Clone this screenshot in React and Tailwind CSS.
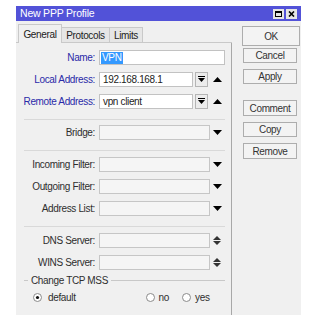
import React from "react";

function DropBtnIcon() {
  return (
    <svg width="7" height="7" viewBox="0 0 7 7">
      <rect x="0" y="0" width="7" height="1" fill="#000" />
      <polygon points="0,2 7,2 3.5,6" fill="#000" />
    </svg>
  );
}

function Up() {
  return (
    <svg width="9" height="5" viewBox="0 0 9 5">
      <polygon points="0,5 9,5 4.5,0" fill="#000" />
    </svg>
  );
}

function Down() {
  return (
    <svg width="9" height="5" viewBox="0 0 9 5">
      <polygon points="0,0 9,0 4.5,5" fill="#000" />
    </svg>
  );
}

function Spin() {
  return (
    <div className="flex flex-col gap-[1px] ml-[3px]">
      <svg width="8" height="4" viewBox="0 0 8 4">
        <polygon points="0,4 8,4 4,0" fill="#333" />
      </svg>
      <svg width="8" height="4" viewBox="0 0 8 4">
        <polygon points="0,0 8,0 4,4" fill="#333" />
      </svg>
    </div>
  );
}

function Radio({ checked }) {
  return (
    <svg width="9" height="9" viewBox="0 0 9 9">
      <circle cx="4.5" cy="4.5" r="4" fill="#fff" stroke="#8a8a8a" strokeWidth="1" />
      {checked && <circle cx="4.5" cy="4.5" r="1.6" fill="#111" />}
    </svg>
  );
}

function Label({ children, blue }) {
  return (
    <div
      className={
        "w-[79px] text-right leading-[15px] whitespace-nowrap " +
        (blue ? "text-[#2a2aa8]" : "text-[#2e2e2e]")
      }
    >
      {children}
    </div>
  );
}

function Sep({ className }) {
  return <div className={"ml-[8px] w-[201px] h-px bg-[#d9d9d9] " + className} />;
}

function Btn({ children, className }) {
  return (
    <div
      className={
        "flex items-center justify-center border border-[#adadad] bg-[#f3f3f3] text-[#333] " +
        className
      }
    >
      {children}
    </div>
  );
}

export default function App() {
  return (
    <div className="w-[309px] h-[320px] bg-white pt-[6px] pl-[16px] font-['Liberation_Sans',Arial,sans-serif] text-[10px] tracking-[-0.35px] text-[#2e2e2e]">
      <div className="w-[285px] h-[309px] bg-[#f0f0f0] flex flex-col">
        {/* Title bar */}
        <div className="h-[15px] bg-[#5252d8] flex items-center justify-between pl-[4px] pr-[4px]">
          <span className="text-white text-[10.5px] tracking-[-0.2px] leading-[15px]">New PPP Profile</span>
          <div className="flex gap-[2px]">
            <div className="w-[11px] h-[10px] bg-[#e4e4e4] flex items-center justify-center">
              <div className="w-[7px] h-[6px] border border-black border-t-2" />
            </div>
            <div className="w-[11px] h-[10px] bg-[#e4e4e4] flex items-center justify-center">
              <svg width="7" height="6" viewBox="0 0 7 6">
                <path d="M1 0.5 L6 5.5 M6 0.5 L1 5.5" stroke="#000" strokeWidth="1.6" />
              </svg>
            </div>
          </div>
        </div>

        <div className="flex flex-1">
          {/* Left panel */}
          <div className="w-[216px] flex flex-col">
            {/* Tabs */}
            <div className="h-[22px] flex items-end">
              <div className="w-[2px] h-px bg-[#c9c9c9]" />
              <div className="w-[44px] h-[19px] border-l border-t border-r border-[#c9c9c9] bg-[#f0f0f0] flex items-center justify-center text-[#222]">
                General
              </div>
              <div className="w-[48px] h-[16px] border-t border-r border-b border-[#c9c9c9] bg-[#e6e6e6] flex items-center justify-center text-[#222]">
                Protocols
              </div>
              <div className="w-[33px] h-[16px] border-t border-r border-b border-[#c9c9c9] bg-[#e6e6e6] flex items-center justify-center text-[#222]">
                Limits
              </div>
              <div className="flex-1 h-px bg-[#c9c9c9]" />
            </div>

            {/* Content */}
            <div className="flex-1 border-r border-[#a8a8a8] flex flex-col pt-[7px]">
              <div className="flex items-center h-[15px]">
                <Label blue>Name:</Label>
                <div className="ml-[4px] w-[126px] h-[15px] border border-[#c2c2c2] bg-white flex items-center pl-[1px]">
                  <span className="bg-[#3399ff] text-white leading-[12px] px-[1px]">VPN</span>
                </div>
              </div>

              <div className="flex items-center h-[15px] mt-[7px]">
                <Label blue>Local Address:</Label>
                <div className="ml-[4px] w-[94px] h-[15px] border border-[#c2c2c2] bg-white flex items-center pl-[3px] text-[#222]">
                  192.168.168.1
                </div>
                <div className="ml-[2px] w-[13px] h-[15px] border border-[#b5b5b5] bg-[#ececec] flex items-center justify-center">
                  <DropBtnIcon />
                </div>
                <div className="ml-[5px] flex items-center">
                  <Up />
                </div>
              </div>

              <div className="flex items-center h-[15px] mt-[7px]">
                <Label blue>Remote Address:</Label>
                <div className="ml-[4px] w-[94px] h-[15px] border border-[#c2c2c2] bg-white flex items-center pl-[3px] text-[#222]">
                  vpn client
                </div>
                <div className="ml-[2px] w-[13px] h-[15px] border border-[#b5b5b5] bg-[#ececec] flex items-center justify-center">
                  <DropBtnIcon />
                </div>
                <div className="ml-[5px] flex items-center">
                  <Up />
                </div>
              </div>

              <Sep className="mt-[10px]" />

              <div className="flex items-center h-[15px] mt-[5px]">
                <Label>Bridge:</Label>
                <div className="ml-[4px] w-[111px] h-[15px] border border-[#c6c6c6] bg-[#f5f5f5]" />
                <div className="ml-[3px] flex items-center">
                  <Down />
                </div>
              </div>

              <Sep className="mt-[10px]" />

              <div className="flex items-center h-[15px] mt-[6px]">
                <Label>Incoming Filter:</Label>
                <div className="ml-[4px] w-[111px] h-[15px] border border-[#c6c6c6] bg-[#f5f5f5]" />
                <div className="ml-[3px] flex items-center">
                  <Down />
                </div>
              </div>

              <div className="flex items-center h-[15px] mt-[7px]">
                <Label>Outgoing Filter:</Label>
                <div className="ml-[4px] w-[111px] h-[15px] border border-[#c6c6c6] bg-[#f5f5f5]" />
                <div className="ml-[3px] flex items-center">
                  <Down />
                </div>
              </div>

              <div className="flex items-center h-[15px] mt-[7px]">
                <Label>Address List:</Label>
                <div className="ml-[4px] w-[111px] h-[15px] border border-[#c6c6c6] bg-[#f5f5f5]" />
                <div className="ml-[3px] flex items-center">
                  <Down />
                </div>
              </div>

              <Sep className="mt-[10px]" />

              <div className="flex items-center h-[15px] mt-[6px]">
                <Label>DNS Server:</Label>
                <div className="ml-[4px] w-[111px] h-[15px] border border-[#c6c6c6] bg-[#f5f5f5]" />
                <Spin />
              </div>

              <div className="flex items-center h-[15px] mt-[7px]">
                <Label>WINS Server:</Label>
                <div className="ml-[4px] w-[111px] h-[15px] border border-[#c6c6c6] bg-[#f5f5f5]" />
                <Spin />
              </div>

              {/* Group */}
              <div className="flex items-center h-[13px] mt-[4px] ml-[8px] w-[201px]">
                <div className="w-[4px] h-px bg-[#c8c8c8]" />
                <span className="px-[3px] leading-[13px] text-[#2e2e2e]">Change TCP MSS</span>
                <div className="flex-1 h-px bg-[#c8c8c8]" />
              </div>

              <div className="flex items-center h-[14px] mt-[3px]">
                <div className="ml-[17px] flex items-center">
                  <Radio checked />
                </div>
                <span className="ml-[6px]">default</span>
                <div className="ml-[70px] flex items-center">
                  <Radio />
                </div>
                <span className="ml-[4px]">no</span>
                <div className="ml-[13px] flex items-center">
                  <Radio />
                </div>
                <span className="ml-[4px]">yes</span>
              </div>
            </div>
          </div>

          {/* Right buttons */}
          <div className="flex flex-col pl-[10px] pt-[5px]">
            <Btn className="w-[58px] h-[20px] border-[#5a5a5a]">OK</Btn>
            <Btn className="w-[54px] h-[15px] ml-[1px] mt-[2px]">Cancel</Btn>
            <Btn className="w-[54px] h-[15px] ml-[1px] mt-[6px]">Apply</Btn>
            <Btn className="w-[54px] h-[16px] ml-[1px] mt-[16px]">Comment</Btn>
            <Btn className="w-[54px] h-[15px] ml-[1px] mt-[6px]">Copy</Btn>
            <Btn className="w-[54px] h-[16px] ml-[1px] mt-[6px]">Remove</Btn>
          </div>
        </div>
      </div>
    </div>
  );
}
